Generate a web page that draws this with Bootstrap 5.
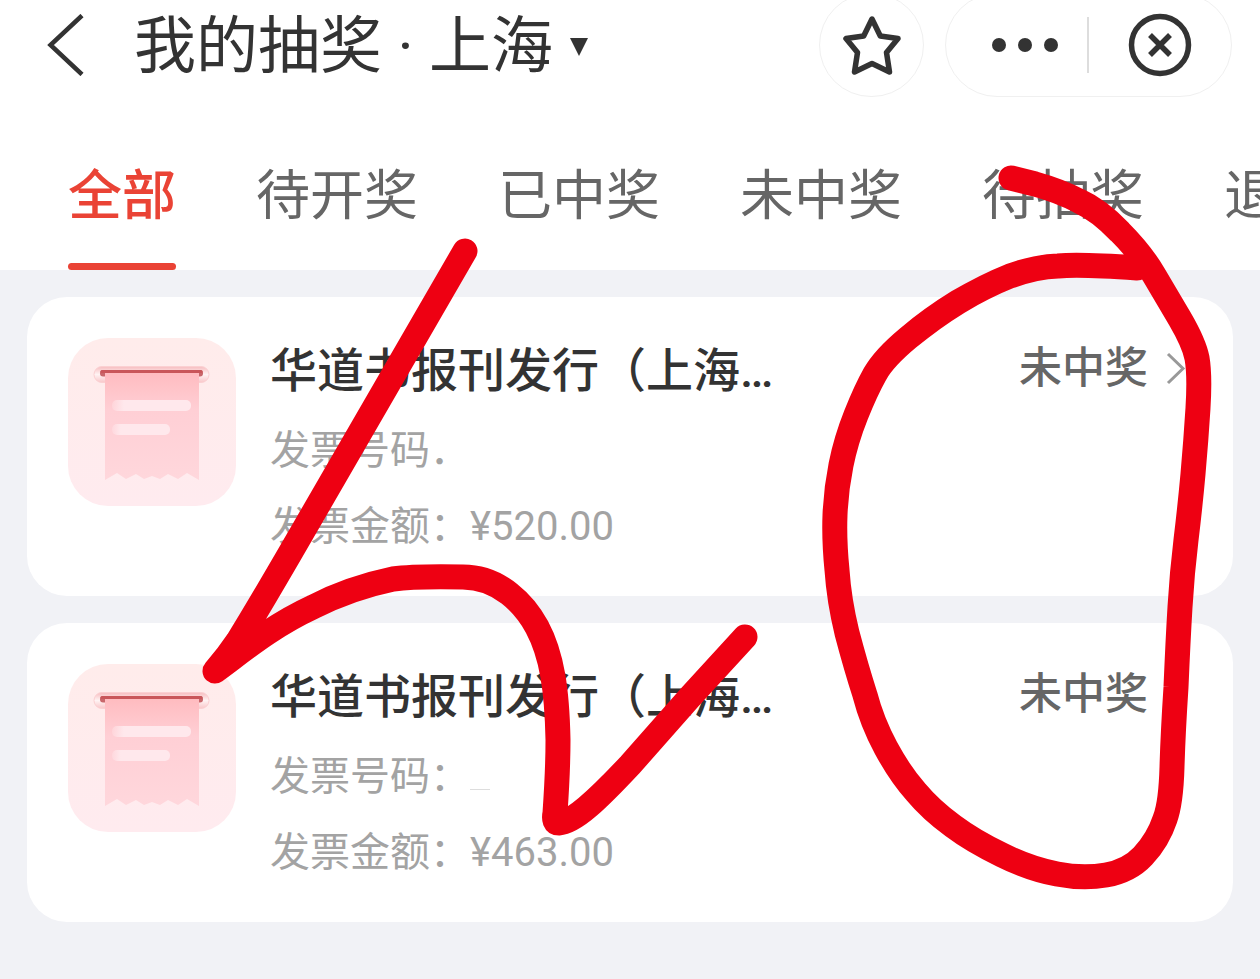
<!DOCTYPE html>
<html lang="zh-CN">
<head>
<meta charset="utf-8">
<meta name="viewport" content="width=device-width, initial-scale=1">
<title>我的抽奖</title>
<link href="https://cdn.jsdelivr.net/npm/bootstrap@5.3.0/dist/css/bootstrap.min.css" rel="stylesheet">
<style>
  body { background: #f1f2f6; color: #333; font-family: Roboto, "Noto Sans CJK SC", sans-serif; overflow-x: hidden; }
  .top-bar { height: 90px; padding: 0 28px 0 47px; }
  .page-title { font-size: 62px; line-height: 88px; padding-top: 4px; font-weight: 400; margin-left: 50px; }
  .plain-btn { border: 0; background: none; padding: 0; color: inherit; display: flex; align-items: center; justify-content: center; }
  .round-btn { width: 105px; height: 104px; border: 1px solid #f0f0f0; border-radius: 52px; }
  .button-group { gap: 21px; }
  .capsule { width: 287px; height: 104px; border: 1px solid #f0f0f0; border-radius: 52px; }
  .capsule .more-btn { width: 141px; padding-left: 16px; }
  .capsule .sep { width: 2px; height: 56px; background: #ddd; }
  .tab-row { gap: 80px; padding: 60px 0 0 68px; height: 180px; overflow: hidden; }
  .tab-row .nav-link { padding: 0; color: #666; font-size: 54px; line-height: 94px; height: 120px; border-radius: 0; white-space: nowrap; font-weight: 400; }
  .tab-row .nav-link.active { color: #ea4335; font-weight: 500; position: relative; }
  .tab-row .nav-link.active::after { content: ""; position: absolute; left: 0; right: 0; bottom: 0; height: 7px; border-radius: 4px; background: #ea4335; }
  .ticket-list { padding: 27px; gap: 27px; }
  .ticket { border: 0; border-radius: 40px; padding: 41px 45px 31px 41px; gap: 34px; }
  .ticket-name { font-size: 47px; line-height: 66px; font-weight: 500; margin: 0 0 9px; color: #333; }
  .ticket-meta { font-size: 40px; line-height: 76px; color: #a3a3a3; margin: 0; font-weight: 400; }
  .blank-no { display: inline-block; width: 20px; height: 1px; background: #ddd; }
  .ticket-state { font-size: 43px; line-height: 60px; font-weight: 500; color: #666; gap: 18px; }
  .pen { left: 0; top: 0; width: 100%; pointer-events: none; }
</style>
</head>
<body class="position-relative">

<header class="bg-white">
  <div class="top-bar d-flex align-items-center">
    <button class="plain-btn" type="button" aria-label="返回">
      <svg width="37" height="62" viewBox="0 0 37 62" fill="none" stroke="#333" stroke-width="4.500"><path d="M35 1.500 3.500 31l31.500 29.500"/></svg>
    </button>
    <h1 class="page-title mb-0 text-nowrap">我的抽奖 · 上海</h1>
    <button class="plain-btn ms-3 pt-1" type="button" aria-label="选择城市">
      <svg width="20" height="20" viewBox="0 0 20 20"><path d="M1 1h18l-9 18z" fill="#333"/></svg>
    </button>
    <div class="button-group d-flex ms-auto flex-shrink-0">
      <button class="plain-btn round-btn" type="button" aria-label="收藏">
        <svg width="58" height="60" viewBox="0 0 58 60" fill="none" stroke="#333" stroke-width="5.500" stroke-linejoin="round"><path d="M29 4l8.300 17 17.700 2.500-11.500 14L46.500 57 29 48.500 11.500 57l3-19.500L3 23.500 20.700 21z"/></svg>
      </button>
      <div class="capsule d-flex align-items-center">
        <button class="plain-btn more-btn h-100" type="button" aria-label="更多">
          <svg width="68" height="16" viewBox="0 0 68 16" fill="#333"><circle cx="8" cy="8" r="7"/><circle cx="34" cy="8" r="7"/><circle cx="60" cy="8" r="7"/></svg>
        </button>
        <span class="sep"></span>
        <button class="plain-btn h-100 flex-grow-1" type="button" aria-label="关闭">
          <svg width="64" height="64" viewBox="0 0 64 64" fill="none" stroke="#333"><circle cx="32" cy="32" r="28.500" stroke-width="5.500"/><path d="M22 22l20 20M42 22 22 42" stroke-width="5.500"/></svg>
        </button>
      </div>
    </div>
  </div>
  <nav class="nav flex-nowrap tab-row">
    <a class="nav-link active" href="#">全部</a>
    <a class="nav-link" href="#">待开奖</a>
    <a class="nav-link" href="#">已中奖</a>
    <a class="nav-link" href="#">未中奖</a>
    <a class="nav-link" href="#">待抽奖</a>
    <a class="nav-link" href="#">退</a>
  </nav>
</header>

<svg width="0" height="0" class="position-absolute" aria-hidden="true">
  <defs>
    <linearGradient id="tile" x1="0" y1="0" x2="0" y2="1"><stop offset="0" stop-color="#ffeceb"/><stop offset="1" stop-color="#ffebef"/></linearGradient>
    <linearGradient id="paper" x1="0" y1="0" x2="0" y2="1"><stop offset="0" stop-color="#ffbcc0"/><stop offset=".35" stop-color="#ffcfd5"/><stop offset="1" stop-color="#ffd7dc"/></linearGradient>
    <linearGradient id="rim" x1="0" y1="0" x2="0" y2="1"><stop offset="0" stop-color="#f7bcbf"/><stop offset=".5" stop-color="#fff3f3"/><stop offset="1" stop-color="#f9c6c9"/></linearGradient>
    <linearGradient id="bar" x1="0" y1="0" x2="1" y2="0"><stop offset="0" stop-color="#ffe8ec" stop-opacity=".3"/><stop offset=".15" stop-color="#ffe8ec"/></linearGradient>
    <symbol id="receipt" viewBox="0 0 168 168">
      <rect width="168" height="168" rx="40" fill="url(#tile)"/>
      <rect x="26" y="28.500" width="115" height="16" rx="8" fill="url(#rim)" stroke="#fbd0d2"/>
      <rect x="32" y="32" width="103" height="6.500" rx="3" fill="#c9676b"/>
      <path d="M37 35h94v107l-12-7-9 6-10-5-8 5-8-3-8 3-8-5-10 5-9-6-12 7z" fill="url(#paper)"/>
      <path d="M34 33.500h99" stroke="#c9565a" stroke-width="3" stroke-linecap="round"/>
      <rect x="44" y="62" width="79" height="11" rx="5" fill="url(#bar)"/>
      <rect x="44" y="86" width="58" height="11" rx="5" fill="url(#bar)"/>
    </symbol>
  </defs>
</svg>

<main class="ticket-list d-flex flex-column">
  <article class="card ticket flex-row align-items-start">
    <svg class="flex-shrink-0" width="168" height="168"><use href="#receipt"/></svg>
    <div class="flex-grow-1">
      <h2 class="ticket-name">华道书报刊发行（上海…</h2>
      <p class="ticket-meta">发票号码．</p>
      <p class="ticket-meta">发票金额：¥520.00</p>
    </div>
    <div class="ticket-state d-flex align-items-center">未中奖
      <svg width="22" height="34" viewBox="0 0 22 34" fill="none" stroke="#999" stroke-width="3"><path d="M2 3l15 14.500L2 32"/></svg>
    </div>
  </article>
  <article class="card ticket flex-row align-items-start">
    <svg class="flex-shrink-0" width="168" height="168"><use href="#receipt"/></svg>
    <div class="flex-grow-1">
      <h2 class="ticket-name">华道书报刊发行（上海…</h2>
      <p class="ticket-meta">发票号码：<span class="blank-no"></span></p>
      <p class="ticket-meta">发票金额：¥463.00</p>
    </div>
    <div class="ticket-state d-flex align-items-center">未中奖
      <svg width="22" height="34" viewBox="0 0 22 34" fill="none" stroke="#999" stroke-width="3"><path d="M2 3l15 14.500L2 32"/></svg>
    </div>
  </article>
</main>

<!-- Freehand pen strokes drawn over the page -->
<svg class="pen position-absolute" viewBox="0 0 1260 979" fill="none" stroke="#ee0012" stroke-width="25" stroke-linecap="round" stroke-linejoin="round" aria-hidden="true">
  <path d="M465 251 292 550Q256 612 238 641 228 656 215 671C240 653 270 627 313 607Q350 588 393 579Q415 576 463 577C500 577 525 605 537 627C552 655 557 690 558 740Q558 770 555 813Q553 823 559 823C575 822 600 797 630 765L690 697 745 637"/>
  <path d="M1011 178 1035 184Q1060 191 1079 201 1099 210 1120 232 1141 253 1154 275 1167 297 1180 319 1194 343 1197 358 1200 375 1198 408 1196 440 1193 474 1190 507 1186 540 1182 573 1180 607 1178 640 1176 687 1173 733 1172 767 1171 803 1165 819 1158 840 1143 856 1129 871 1106 875 1083 879 1057 874 1030 869 1002 855 973 841 953 826 931 810 916 792 900 774 886 748 872 722 865 695 856 667 847 633 839 600 837 570 834 540 835 515 836 490 841 465 846 440 856 415 866 390 875 374 884 358 908 338 932 318 958 302 985 286 1010 276 1035 267 1058 266 1080 264 1137 268"/>
</svg>

<script src="https://cdn.jsdelivr.net/npm/bootstrap@5.3.0/dist/js/bootstrap.bundle.min.js"></script>
</body>
</html>
